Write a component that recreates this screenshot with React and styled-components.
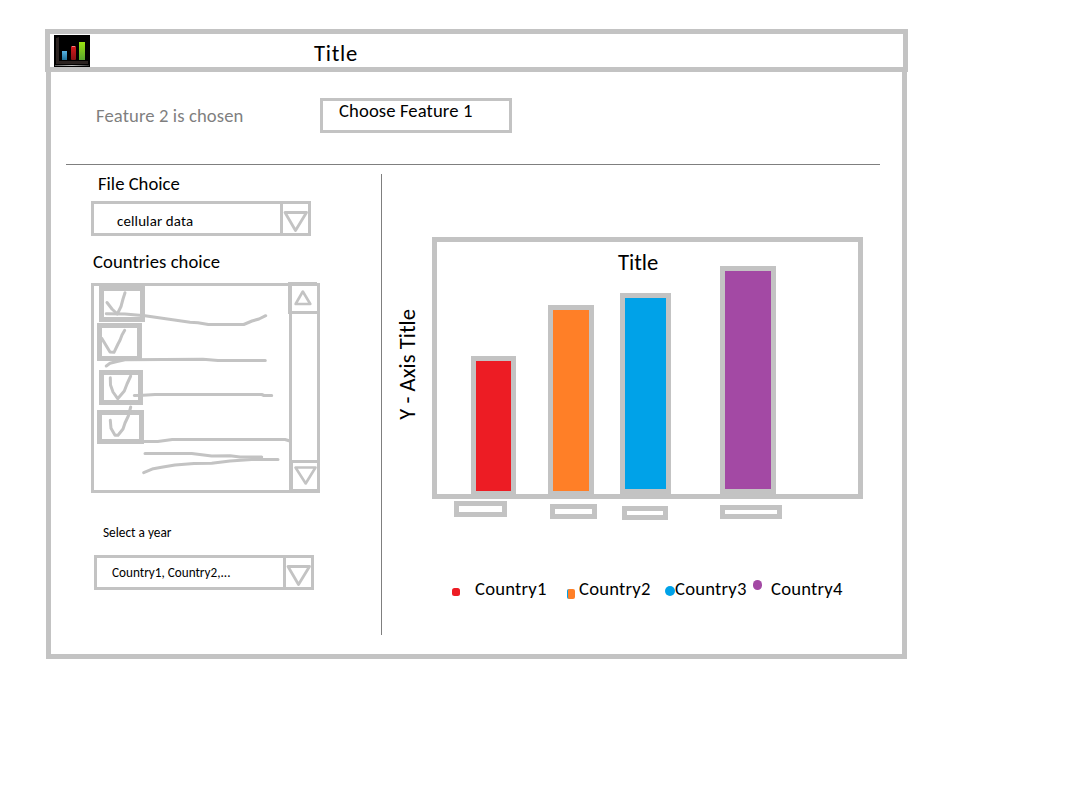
import React from "react";
import styled, { createGlobalStyle } from "styled-components";

const LINE = "#c3c3c3";

const GlobalStyle = createGlobalStyle`
  * { box-sizing: border-box; }
  body {
    margin: 0;
    background: #fff;
    color: #000;
    font-family: Carlito, Lato, "Liberation Sans", sans-serif;
  }
  svg { display: block; }
`;

const Page = styled.main`
  width: 1068px;
  height: 804px;
  padding: 29px 0 0 45px;
`;

const Header = styled.header`
  display: flex;
  width: 863px;
  height: 43px;
  border: 5px solid ${LINE};
  padding: 1px 0 0 4px;
`;

const Text = styled.span`
  display: block;
  white-space: nowrap;
  font-size: ${(p) => p.$size || 18.67}px;
  line-height: ${(p) => p.$line || 20}px;
  letter-spacing: ${(p) => p.$track || 0}px;
  color: ${(p) => p.$color || "#000"};
`;

const HeaderTitle = styled(Text)`
  margin: 6px 0 0 224px;
`;

const Body = styled.div`
  display: flex;
  flex-direction: column;
  width: 861px;
  height: 587px;
  margin-left: 1px;
  border: 5px solid ${LINE};
  border-top: 0;
`;

const FeatureBar = styled.section`
  display: flex;
  align-items: flex-start;
  width: 814px;
  height: 93px;
  margin-left: 15px;
  padding: 26px 0 0 30px;
  border-bottom: 1px solid #7f7f7f;
`;

const FeatureStatus = styled.div`
  width: 224px;
  padding-top: 8px;
`;

const FeatureButton = styled.button`
  width: 192px;
  height: 35px;
  padding: 0 0 0 16px;
  border: 3px solid ${LINE};
  background: #fff;
  font: inherit;
  text-align: left;
  display: flex;
  align-items: flex-start;
`;

const Columns = styled.div`
  display: flex;
  padding-top: 9px;
`;

const Sidebar = styled.aside`
  width: 331px;
  height: 461px;
  padding-left: 40px;
  border-right: 1px solid #7f7f7f;
`;

const FieldLabel = styled(Text)`
  margin: ${(p) => p.$margin};
`;

const Select = styled.div`
  display: flex;
  width: 220px;
  height: 35px;
  margin-left: ${(p) => p.$indent || 0}px;
  border: 3px solid ${LINE};
`;

const SelectValue = styled.div`
  flex: 1;
  padding: ${(p) => p.$pad};
  border-right: 3px solid ${LINE};
`;

const SelectArrow = styled.div`
  width: 25px;
`;

const CountryList = styled.div`
  position: relative;
  display: flex;
  width: 229px;
  height: 210px;
  border: 3px solid ${LINE};
`;

const Options = styled.div`
  flex: 1;
`;

const CheckBox = styled.div`
  width: ${(p) => p.$w}px;
  height: ${(p) => p.$h}px;
  margin: ${(p) => p.$top}px 0 0 ${(p) => p.$left}px;
  border: 5px solid ${LINE};
`;

const Scribbles = styled.svg`
  position: absolute;
  left: -3px;
  top: -3px;
  overflow: visible;
`;

const ScrollBar = styled.div`
  display: flex;
  flex-direction: column;
  justify-content: space-between;
  width: 28px;
  border-left: 3px solid ${LINE};
`;

const ScrollUp = styled.div`
  height: 32px;
  margin: -4px 0 0 -4px;
  border: solid ${LINE};
  border-width: 4px 0 3px 4px;
`;

const ScrollDown = styled.div`
  height: 30px;
  border: solid ${LINE};
  border-width: 3px 0 1px 1px;
`;

const ChartPanel = styled.section`
  display: flex;
  padding: 63px 0 0 13px;
`;

const YAxis = styled.div`
  display: flex;
  align-items: flex-start;
  width: 37px;
  padding-top: 72px;
`;

const YAxisTitle = styled(Text)`
  writing-mode: vertical-rl;
  transform: rotate(180deg);
`;

const Plot = styled.div`
  display: flex;
  align-items: flex-end;
  position: relative;
  width: 431px;
  height: 262px;
  padding-left: 34px;
  border: 5px solid ${LINE};
`;

const PlotTitle = styled(Text)`
  position: absolute;
  left: 181px;
  top: 8px;
`;

const Bar = styled.div`
  width: ${(p) => p.$w}px;
  height: ${(p) => p.$h}px;
  margin-right: ${(p) => p.$gap}px;
  border: 5px solid ${LINE};
  border-bottom-width: ${(p) => p.$base}px;
  background: ${(p) => p.$color};
`;

const Ticks = styled.div`
  display: flex;
  align-items: flex-start;
  height: 80px;
  padding-left: 22px;
`;

const Tick = styled.div`
  width: ${(p) => p.$w}px;
  height: ${(p) => p.$h}px;
  margin: ${(p) => p.$top}px ${(p) => p.$gap}px 0 0;
  border: 5px solid ${LINE};
`;

const Legend = styled.div`
  display: flex;
  align-items: flex-start;
  padding-left: 20px;
`;

const Dot = styled.i`
  width: ${(p) => p.$w}px;
  height: ${(p) => p.$h}px;
  margin: ${(p) => p.$top}px ${(p) => p.$gap}px 0 0;
  border-left: ${(p) => (p.$edge ? `1px solid ${p.$edge}` : "0")};
  border-radius: ${(p) => p.$round}px;
  background: ${(p) => p.$color};
`;

const LegendLabel = styled(Text)`
  width: ${(p) => p.$w}px;
`;

const bars = [
  { w: 45, h: 138, gap: 32, base: 3, color: "#ed1c24" },
  { w: 46, h: 189, gap: 26, base: 3, color: "#ff7f27" },
  { w: 51, h: 201, gap: 49, base: 5, color: "#00a2e8" },
  { w: 56, h: 228, gap: 0, base: 5, color: "#a349a4" },
];

const ticks = [
  { w: 53, h: 16, top: 2, gap: 43 },
  { w: 47, h: 15, top: 5, gap: 25 },
  { w: 46, h: 14, top: 7, gap: 52 },
  { w: 62, h: 14, top: 6, gap: 0 },
];

const legend = [
  { name: "Country1", w: 8, h: 8, top: 9, gap: 15, round: 2.5, color: "#ed1c24", label: 92 },
  { name: "Country2", w: 8, h: 10, top: 10, gap: 4, round: 2, color: "#ff7f27", edge: "#00a2e8", label: 86 },
  { name: "Country3", w: 10, h: 10, top: 7, gap: 0, round: 5, color: "#00a2e8", label: 78 },
  { name: "Country4", w: 9, h: 10, top: 1, gap: 9, round: 4.5, color: "#a349a4", label: 80 },
];

const checkBoxes = [
  { w: 46, h: 36, top: 0, left: 5 },
  { w: 45, h: 38, top: 1, left: 3 },
  { w: 44, h: 35, top: 9, left: 5 },
  { w: 47, h: 34, top: 5, left: 3 },
];

const strokes = [
  "107,302.5 112,309 117.3,314 121,306.5 123,299 125,292.7",
  "106.3,313.7 125,314 145,315.7 190,322.3 198,322.7 208.3,324.5 243.7,324.5 252,321 259,319 265.7,315.7",
  "101.7,338.3 110,352 114,352.3 118,344 120,340.3 122,335 124.7,330.3",
  "106.3,366 110,363.3 117,361.5 125,359.7 203,359.3 218,360.5 265.3,360.5",
  "110.3,377.7 110.5,385 113,392 117.7,398.7 124.3,391 127,384 130.7,376",
  "134.3,395.5 143,395.3 155,394.5 261.7,394.5 264,395.5 271.7,395.5",
  "110.3,420.3 111,428.3 115,435.3 118,435.3 123,429 125,423 128.3,416 130.7,407",
  "143.3,441.5 157.7,441.5 172.3,439.5 285,439.5 290,441",
  "145,453.5 191.7,453.5 211.7,456 230,455.7 240,457 261.7,457",
  "143.7,472.7 153.3,468.7 163,467 175,465 194,463.5 211.7,463.3 230,461 251.7,459.5 278,459.5",
];

function Arrow({ points, width = 25, height = 29, stroke = 2.8 }) {
  return (
    <svg width={width} height={height} fill="none" stroke={LINE} strokeWidth={stroke} strokeLinejoin="round" overflow="visible">
      <polygon points={points} />
    </svg>
  );
}

function Logo() {
  return (
    <svg width="36" height="32" viewBox="0 0 36 32">
      <defs>
        <linearGradient id="floor" x2="1">
          <stop offset="0" stopColor="#555" />
          <stop offset=".5" stopColor="#bbb" />
          <stop offset="1" stopColor="#333" />
        </linearGradient>
        <linearGradient id="blue" x2="0" y2="1">
          <stop offset="0" stopColor="#58b4e4" />
          <stop offset="1" stopColor="#1f7099" />
        </linearGradient>
        <linearGradient id="red" x2="0" y2="1">
          <stop offset="0" stopColor="#d6191c" />
          <stop offset="1" stopColor="#861215" />
        </linearGradient>
        <linearGradient id="green" x2="0" y2="1">
          <stop offset="0" stopColor="#9be311" />
          <stop offset="1" stopColor="#58a52e" />
        </linearGradient>
      </defs>
      <rect width="36" height="32" fill="#000" />
      <path d="M2 3l3-1v24h29v3H2z" fill="#2b2321" />
      <rect x="1" y="30" width="34" height="1" fill="url(#floor)" />
      <rect x="8" y="16" width="5" height="9" fill="url(#blue)" />
      <rect x="17" y="11" width="5" height="14" rx="1" fill="url(#red)" />
      <rect x="18" y="11" width="3" height="1" fill="#e98582" />
      <rect x="25" y="7" width="6" height="18" fill="url(#green)" />
    </svg>
  );
}

export default function App() {
  return (
    <Page>
      <GlobalStyle />
      <Header>
        <Logo />
        <HeaderTitle $size={22.67} $line={24} $track={0.75}>Title</HeaderTitle>
      </Header>
      <Body>
        <FeatureBar>
          <FeatureStatus>
            <Text $color="#7f7f7f" $track={0.1}>Feature 2 is chosen</Text>
          </FeatureStatus>
          <FeatureButton>
            <Text $track={0.1}>Choose Feature 1</Text>
          </FeatureButton>
        </FeatureBar>
        <Columns>
          <Sidebar>
            <FieldLabel $margin="0 0 7px 7px">File Choice</FieldLabel>
            <Select>
              <SelectValue $pad="8px 0 0 23px">
                <Text $size={14.9} $line={18} $track={0.15}>cellular data</Text>
              </SelectValue>
              <SelectArrow>
                <Arrow points="2,8.5 23.5,8.5 12.5,26.5" />
              </SelectArrow>
            </Select>
            <FieldLabel $margin="16px 0 11px 2px" $track={0.06}>Countries choice</FieldLabel>
            <CountryList>
              <Options>
                {checkBoxes.map((b, i) => (
                  <CheckBox key={i} $w={b.w} $h={b.h} $top={b.top} $left={b.left} />
                ))}
              </Options>
              <ScrollBar>
                <ScrollUp>
                  <Arrow points="10.8,5.5 3.6,18 18.3,18" stroke={2.6} height={20} />
                </ScrollUp>
                <ScrollDown>
                  <Arrow points="2.5,4.5 22.5,4.5 12.7,20.5" stroke={2.6} height={20} />
                </ScrollDown>
              </ScrollBar>
              <Scribbles
                width="229"
                height="210"
                viewBox="91 283 229 210"
                fill="none"
                stroke={LINE}
                strokeWidth="3"
                strokeLinecap="round"
                strokeLinejoin="round"
              >
                {strokes.map((points) => (
                  <polyline key={points} points={points} />
                ))}
              </Scribbles>
            </CountryList>
            <FieldLabel $size={13.33} $line={16} $margin="32px 0 14px 12px">Select a year</FieldLabel>
            <Select $indent={3}>
              <SelectValue $pad="7px 0 0 15px">
                <Text $size={13.2} $line={16}>Country1, Country2,...</Text>
              </SelectValue>
              <SelectArrow>
                <Arrow points="2,8.5 23.5,8.5 12.5,26.5" />
              </SelectArrow>
            </Select>
          </Sidebar>
          <ChartPanel>
            <YAxis>
              <YAxisTitle $size={22.67} $line={24}>Y - Axis Title</YAxisTitle>
            </YAxis>
            <div>
              <Plot>
                <PlotTitle $size={22.67} $line={24}>Title</PlotTitle>
                {bars.map((b) => (
                  <Bar key={b.color} $w={b.w} $h={b.h} $gap={b.gap} $base={b.base} $color={b.color} />
                ))}
              </Plot>
              <Ticks>
                {ticks.map((t, i) => (
                  <Tick key={i} $w={t.w} $h={t.h} $top={t.top} $gap={t.gap} />
                ))}
              </Ticks>
              <Legend>
                {legend.map((l) => (
                  <React.Fragment key={l.name}>
                    <Dot $w={l.w} $h={l.h} $top={l.top} $gap={l.gap} $round={l.round} $color={l.color} $edge={l.edge} />
                    <LegendLabel $w={l.label} $track={0.2}>{l.name}</LegendLabel>
                  </React.Fragment>
                ))}
              </Legend>
            </div>
          </ChartPanel>
        </Columns>
      </Body>
    </Page>
  );
}
